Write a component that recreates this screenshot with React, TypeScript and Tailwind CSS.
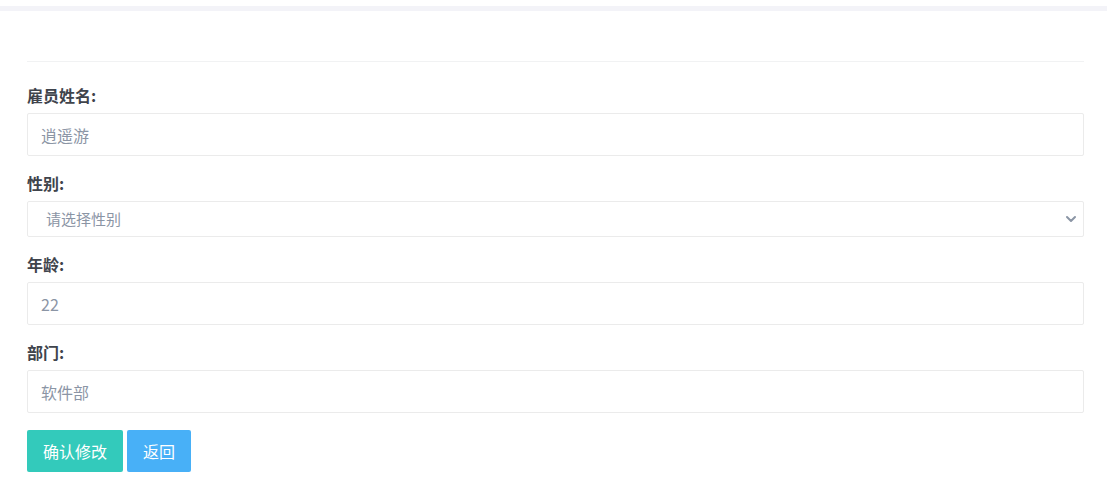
import { ChevronDown } from "lucide-react";

const font = { fontFamily: '"Microsoft YaHei", "Noto Sans CJK SC", "Noto Sans", sans-serif' };

function Field({ label, children }: { label: string; children: React.ReactNode }) {
  return (
    <div className="mb-4">
      <label className="block mb-[7px] text-[16px] leading-[22px] font-bold text-[#3f444c]">{label}</label>
      {children}
    </div>
  );
}

function TextInput({ value }: { value: string }) {
  return (
    <input
      type="text"
      defaultValue={value}
      className="block w-full h-[43px] px-[13px] border border-[#ebebeb] rounded-[2px] text-[16px] text-[#8b95a5] bg-white outline-none"
    />
  );
}

export default function App() {
  return (
    <div className="w-[1107px] h-[496px] bg-white" style={font}>
      <div className="h-[6px] bg-white" />
      <div className="h-[5px] bg-[#f3f3f8]" />
      <div className="px-[27px] pr-[23px]">
        <div className="h-[51px] border-b border-[#f1f2f3]" />
        <form className="pt-[22px]" onSubmit={(e) => e.preventDefault()}>
          <Field label="雇员姓名:">
            <TextInput value="逍遥游" />
          </Field>
          <Field label="性别:">
            <div className="relative">
              <select
                defaultValue=""
                className="block w-full h-[36px] pl-[18px] pr-8 border border-[#ebebeb] rounded-[2px] text-[15px] text-[#8b95a5] bg-white outline-none appearance-none"
              >
                <option value="" disabled>
                  请选择性别
                </option>
                <option value="男">男</option>
                <option value="女">女</option>
              </select>
              <ChevronDown
                size={16}
                strokeWidth={3}
                className="absolute right-[5px] top-[10px] text-[#8b95a5] pointer-events-none"
              />
            </div>
          </Field>
          <Field label="年龄:">
            <TextInput value="22" />
          </Field>
          <Field label="部门:">
            <TextInput value="软件部" />
          </Field>
          <div className="flex gap-[4px] pt-px">
            <button className="h-[42px] px-[16px] rounded-[2px] bg-[#33cabb] text-white text-[16px]">确认修改</button>
            <button className="h-[42px] px-[16px] rounded-[2px] bg-[#48b0f7] text-white text-[16px]">返回</button>
          </div>
        </form>
      </div>
    </div>
  );
}
